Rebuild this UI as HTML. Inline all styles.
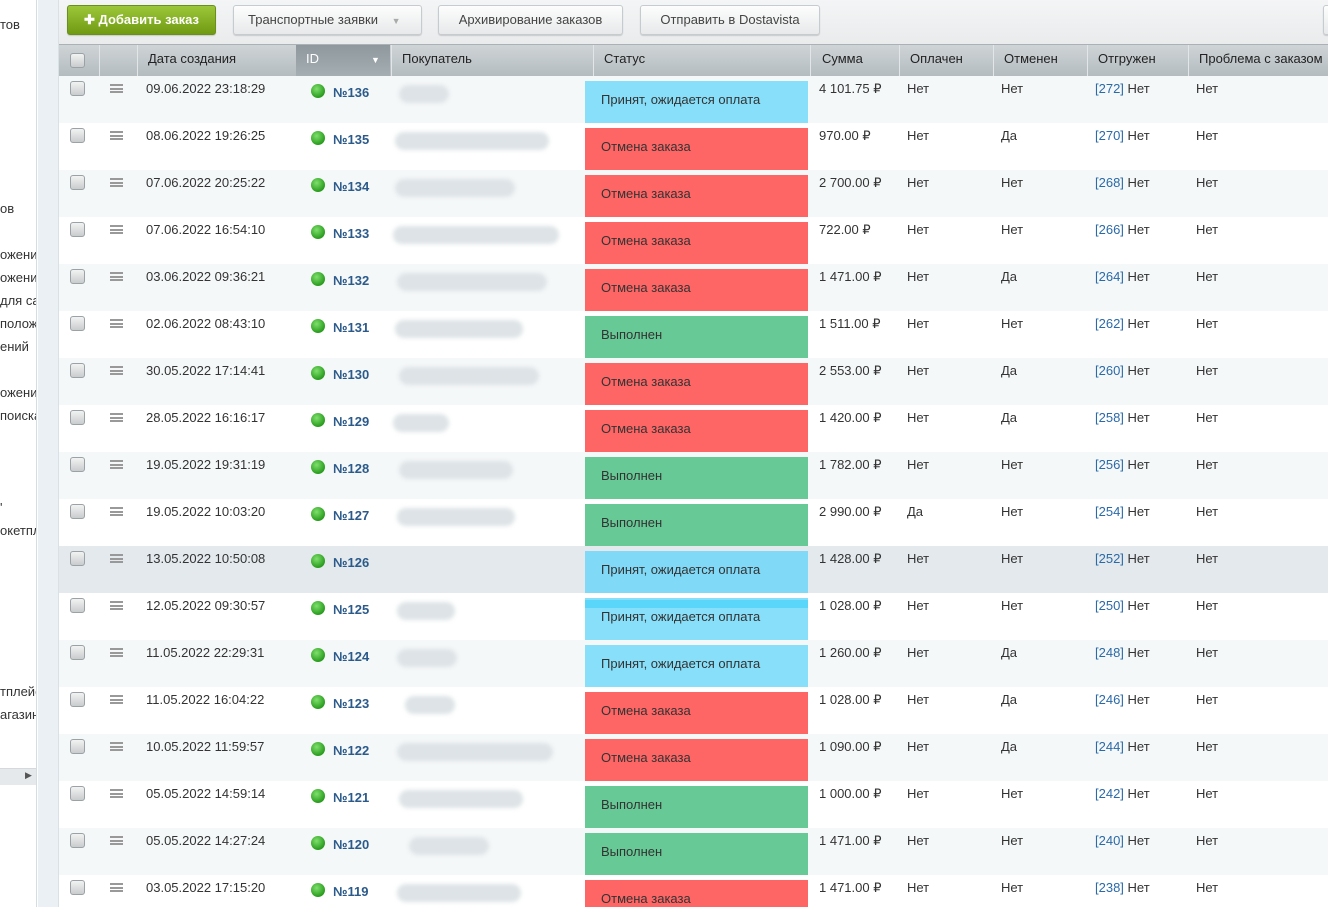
<!DOCTYPE html><html style="width:1328px;height:907px;overflow:hidden"><head><meta charset="utf-8"><style>
*{margin:0;padding:0;box-sizing:border-box}
body{width:1328px;height:907px;overflow:hidden;position:relative;background:#fff;font-family:"Liberation Sans",Arial,sans-serif;font-size:13px;color:#333}
.a{position:absolute;white-space:nowrap}
.sb{left:0;top:0;width:37px;height:907px;background:#fff;border-right:1px solid #d4dde3;overflow:hidden}
.sb div{position:absolute;left:0;font-size:13px;color:#333}
.strip{left:38px;top:0;width:21px;height:907px;background:#eaf0f3;border-right:1px solid #d9e1e5}
.tb{left:59px;top:0;width:1269px;height:44px;background:linear-gradient(#f4f5f6,#e9ebec)}
.btn{position:absolute;top:5px;height:30px;border:1px solid #c5cbce;border-radius:3px;background:linear-gradient(#fdfdfd,#e7e9ea);color:#444;font-size:13px;line-height:28px;text-align:center;box-shadow:0 1px 1px rgba(0,0,0,.15)}
.hd{left:59px;top:44px;width:1269px;height:32px;background:linear-gradient(#cfd4d6,#b4bcc0);border-top:1px solid #aab2b6}
.hd span{position:absolute;top:6px;color:#222;font-size:13px}
.hd i{position:absolute;top:0;width:1px;height:31px;background:#e2e6e8}
.row{position:absolute;left:59px;width:1269px;height:47px}
.cb{position:absolute;left:11px;top:5px;width:15px;height:15px;border:1px solid #9aa2a6;border-radius:3px;background:linear-gradient(#f2f2f2,#c9cccd)}
.mn{position:absolute;left:51px;top:8px;width:13px;height:9px;border-top:2px solid #999;border-bottom:2px solid #999}
.mn:after{content:"";position:absolute;left:0;top:1.5px;width:13px;height:2px;background:#999}
.t{position:absolute;top:5px}
.dot{position:absolute;left:252px;top:8px;width:14px;height:14px;border-radius:50%;background:radial-gradient(circle at 40% 35%,#7ee06b,#2a9c1f 70%)}
.id{position:absolute;left:274px;top:9px;color:#2b5a8a;font-weight:bold;font-size:13px}
.bl{position:absolute;top:9px;height:18px;border-radius:9px;background:#dde3e6;filter:blur(2px)}
.st{position:absolute;left:526px;top:5px;width:223px;height:42px;padding-left:16px;line-height:38px}
.B{background:#88dff9}.R{background:#fe6565}.G{background:#67c995}
.lk{color:#2a6aa8}
</style></head><body>
<div class="a sb">
<div style="top:17px">тов</div><div style="top:201px">ов</div><div style="top:247px">ожений</div><div style="top:270px">ожений</div><div style="top:293px">для са</div><div style="top:316px">положе</div><div style="top:339px">ений</div><div style="top:385px">ожений</div><div style="top:408px">поиска</div><div style="top:500px">'</div><div style="top:523px">окетпл</div><div style="top:684px">тплейс</div><div style="top:707px">агазин</div>
<div style="top:768px;left:0;right:0;height:17px;background:#e6e9eb;border-top:1px solid #d5d9db"></div>
<div style="top:770px;left:25px;font-size:9px;color:#555">▶</div>
</div>
<div class="a strip"></div>
<div class="a tb">
<div class="btn" style="left:8px;width:149px;background:linear-gradient(#9dc73a,#6f9a12);border-color:#6a8f1a;color:#fff;font-weight:bold">✚ Добавить заказ</div>
<div class="btn" style="left:174px;width:189px;text-align:left;padding-left:14px">Транспортные заявки <span style="color:#aaa;font-size:9px;margin-left:10px">▼</span></div>
<div class="btn" style="left:379px;width:185px">Архивирование заказов</div>
<div class="btn" style="left:581px;width:180px">Отправить в Dostavista</div>
<div class="btn" style="left:1264px;width:20px"></div>
</div>
<div class="a hd">
<div class="cb" style="top:8px"></div>
<i style="left:40px"></i><i style="left:78px"></i>
<span style="left:89px">Дата создания</span>
<div style="position:absolute;left:237px;top:0;width:94px;height:31px;background:linear-gradient(#8e989d,#a5aeb2)"></div>
<span style="left:247px;color:#fff">ID</span><span style="left:312px;color:#fff;font-size:9px;top:10px">▼</span>
<i style="left:332px"></i>
<span style="left:343px">Покупатель</span><i style="left:534px"></i>
<span style="left:545px">Статус</span><i style="left:751px"></i>
<span style="left:763px">Сумма</span><i style="left:840px"></i>
<span style="left:851px">Оплачен</span><i style="left:934px"></i>
<span style="left:945px">Отменен</span><i style="left:1028px"></i>
<span style="left:1039px">Отгружен</span><i style="left:1129px"></i>
<span style="left:1140px">Проблема с заказом</span>
</div>

<div class="row" style="top:76px;background:#f5f8f9"><div class="cb"></div><div class="mn"></div><span class="t" style="left:87px">09.06.2022 23:18:29</span><div class="dot"></div><span class="id">№136</span><div class="bl" style="left:340px;width:50px"></div><div class="st B">Принят, ожидается оплата</div><span class="t" style="left:760px">4 101.75 ₽</span><span class="t" style="left:848px">Нет</span><span class="t" style="left:942px">Нет</span><span class="t" style="left:1036px"><span class="lk">[272]</span> Нет</span><span class="t" style="left:1137px">Нет</span></div>
<div class="row" style="top:123px"><div class="cb"></div><div class="mn"></div><span class="t" style="left:87px">08.06.2022 19:26:25</span><div class="dot"></div><span class="id">№135</span><div class="bl" style="left:336px;width:154px"></div><div class="st R">Отмена заказа</div><span class="t" style="left:760px">970.00 ₽</span><span class="t" style="left:848px">Нет</span><span class="t" style="left:942px">Да</span><span class="t" style="left:1036px"><span class="lk">[270]</span> Нет</span><span class="t" style="left:1137px">Нет</span></div>
<div class="row" style="top:170px;background:#f5f8f9"><div class="cb"></div><div class="mn"></div><span class="t" style="left:87px">07.06.2022 20:25:22</span><div class="dot"></div><span class="id">№134</span><div class="bl" style="left:336px;width:120px"></div><div class="st R">Отмена заказа</div><span class="t" style="left:760px">2 700.00 ₽</span><span class="t" style="left:848px">Нет</span><span class="t" style="left:942px">Нет</span><span class="t" style="left:1036px"><span class="lk">[268]</span> Нет</span><span class="t" style="left:1137px">Нет</span></div>
<div class="row" style="top:217px"><div class="cb"></div><div class="mn"></div><span class="t" style="left:87px">07.06.2022 16:54:10</span><div class="dot"></div><span class="id">№133</span><div class="bl" style="left:334px;width:166px"></div><div class="st R">Отмена заказа</div><span class="t" style="left:760px">722.00 ₽</span><span class="t" style="left:848px">Нет</span><span class="t" style="left:942px">Нет</span><span class="t" style="left:1036px"><span class="lk">[266]</span> Нет</span><span class="t" style="left:1137px">Нет</span></div>
<div class="row" style="top:264px;background:#f5f8f9"><div class="cb"></div><div class="mn"></div><span class="t" style="left:87px">03.06.2022 09:36:21</span><div class="dot"></div><span class="id">№132</span><div class="bl" style="left:338px;width:150px"></div><div class="st R">Отмена заказа</div><span class="t" style="left:760px">1 471.00 ₽</span><span class="t" style="left:848px">Нет</span><span class="t" style="left:942px">Да</span><span class="t" style="left:1036px"><span class="lk">[264]</span> Нет</span><span class="t" style="left:1137px">Нет</span></div>
<div class="row" style="top:311px"><div class="cb"></div><div class="mn"></div><span class="t" style="left:87px">02.06.2022 08:43:10</span><div class="dot"></div><span class="id">№131</span><div class="bl" style="left:336px;width:128px"></div><div class="st G">Выполнен</div><span class="t" style="left:760px">1 511.00 ₽</span><span class="t" style="left:848px">Нет</span><span class="t" style="left:942px">Нет</span><span class="t" style="left:1036px"><span class="lk">[262]</span> Нет</span><span class="t" style="left:1137px">Нет</span></div>
<div class="row" style="top:358px;background:#f5f8f9"><div class="cb"></div><div class="mn"></div><span class="t" style="left:87px">30.05.2022 17:14:41</span><div class="dot"></div><span class="id">№130</span><div class="bl" style="left:340px;width:140px"></div><div class="st R">Отмена заказа</div><span class="t" style="left:760px">2 553.00 ₽</span><span class="t" style="left:848px">Нет</span><span class="t" style="left:942px">Да</span><span class="t" style="left:1036px"><span class="lk">[260]</span> Нет</span><span class="t" style="left:1137px">Нет</span></div>
<div class="row" style="top:405px"><div class="cb"></div><div class="mn"></div><span class="t" style="left:87px">28.05.2022 16:16:17</span><div class="dot"></div><span class="id">№129</span><div class="bl" style="left:334px;width:56px"></div><div class="st R">Отмена заказа</div><span class="t" style="left:760px">1 420.00 ₽</span><span class="t" style="left:848px">Нет</span><span class="t" style="left:942px">Да</span><span class="t" style="left:1036px"><span class="lk">[258]</span> Нет</span><span class="t" style="left:1137px">Нет</span></div>
<div class="row" style="top:452px;background:#f5f8f9"><div class="cb"></div><div class="mn"></div><span class="t" style="left:87px">19.05.2022 19:31:19</span><div class="dot"></div><span class="id">№128</span><div class="bl" style="left:340px;width:114px"></div><div class="st G">Выполнен</div><span class="t" style="left:760px">1 782.00 ₽</span><span class="t" style="left:848px">Нет</span><span class="t" style="left:942px">Нет</span><span class="t" style="left:1036px"><span class="lk">[256]</span> Нет</span><span class="t" style="left:1137px">Нет</span></div>
<div class="row" style="top:499px"><div class="cb"></div><div class="mn"></div><span class="t" style="left:87px">19.05.2022 10:03:20</span><div class="dot"></div><span class="id">№127</span><div class="bl" style="left:338px;width:118px"></div><div class="st G">Выполнен</div><span class="t" style="left:760px">2 990.00 ₽</span><span class="t" style="left:848px">Да</span><span class="t" style="left:942px">Нет</span><span class="t" style="left:1036px"><span class="lk">[254]</span> Нет</span><span class="t" style="left:1137px">Нет</span></div>
<div class="row" style="top:546px;background:#e3e9ec"><div class="cb"></div><div class="mn"></div><span class="t" style="left:87px">13.05.2022 10:50:08</span><div class="dot"></div><span class="id">№126</span><div class="st B" style="background:#80d9f6">Принят, ожидается оплата</div><span class="t" style="left:760px">1 428.00 ₽</span><span class="t" style="left:848px">Нет</span><span class="t" style="left:942px">Нет</span><span class="t" style="left:1036px"><span class="lk">[252]</span> Нет</span><span class="t" style="left:1137px">Нет</span></div>
<div class="row" style="top:593px"><div class="cb"></div><div class="mn"></div><span class="t" style="left:87px">12.05.2022 09:30:57</span><div class="dot"></div><span class="id">№125</span><div class="bl" style="left:338px;width:58px"></div><div class="st B" style="line-height:38px"><div style="position:absolute;left:0;top:2px;width:223px;height:8px;background:#5ad6fb"></div><span style="position:relative">Принят, ожидается оплата</span></div><span class="t" style="left:760px">1 028.00 ₽</span><span class="t" style="left:848px">Нет</span><span class="t" style="left:942px">Нет</span><span class="t" style="left:1036px"><span class="lk">[250]</span> Нет</span><span class="t" style="left:1137px">Нет</span></div>
<div class="row" style="top:640px;background:#f5f8f9"><div class="cb"></div><div class="mn"></div><span class="t" style="left:87px">11.05.2022 22:29:31</span><div class="dot"></div><span class="id">№124</span><div class="bl" style="left:338px;width:60px"></div><div class="st B">Принят, ожидается оплата</div><span class="t" style="left:760px">1 260.00 ₽</span><span class="t" style="left:848px">Нет</span><span class="t" style="left:942px">Да</span><span class="t" style="left:1036px"><span class="lk">[248]</span> Нет</span><span class="t" style="left:1137px">Нет</span></div>
<div class="row" style="top:687px"><div class="cb"></div><div class="mn"></div><span class="t" style="left:87px">11.05.2022 16:04:22</span><div class="dot"></div><span class="id">№123</span><div class="bl" style="left:346px;width:50px"></div><div class="st R">Отмена заказа</div><span class="t" style="left:760px">1 028.00 ₽</span><span class="t" style="left:848px">Нет</span><span class="t" style="left:942px">Да</span><span class="t" style="left:1036px"><span class="lk">[246]</span> Нет</span><span class="t" style="left:1137px">Нет</span></div>
<div class="row" style="top:734px;background:#f5f8f9"><div class="cb"></div><div class="mn"></div><span class="t" style="left:87px">10.05.2022 11:59:57</span><div class="dot"></div><span class="id">№122</span><div class="bl" style="left:338px;width:156px"></div><div class="st R">Отмена заказа</div><span class="t" style="left:760px">1 090.00 ₽</span><span class="t" style="left:848px">Нет</span><span class="t" style="left:942px">Да</span><span class="t" style="left:1036px"><span class="lk">[244]</span> Нет</span><span class="t" style="left:1137px">Нет</span></div>
<div class="row" style="top:781px"><div class="cb"></div><div class="mn"></div><span class="t" style="left:87px">05.05.2022 14:59:14</span><div class="dot"></div><span class="id">№121</span><div class="bl" style="left:340px;width:124px"></div><div class="st G">Выполнен</div><span class="t" style="left:760px">1 000.00 ₽</span><span class="t" style="left:848px">Нет</span><span class="t" style="left:942px">Нет</span><span class="t" style="left:1036px"><span class="lk">[242]</span> Нет</span><span class="t" style="left:1137px">Нет</span></div>
<div class="row" style="top:828px;background:#f5f8f9"><div class="cb"></div><div class="mn"></div><span class="t" style="left:87px">05.05.2022 14:27:24</span><div class="dot"></div><span class="id">№120</span><div class="bl" style="left:350px;width:80px"></div><div class="st G">Выполнен</div><span class="t" style="left:760px">1 471.00 ₽</span><span class="t" style="left:848px">Нет</span><span class="t" style="left:942px">Нет</span><span class="t" style="left:1036px"><span class="lk">[240]</span> Нет</span><span class="t" style="left:1137px">Нет</span></div>
<div class="row" style="top:875px;height:32px;overflow:hidden"><div class="cb"></div><div class="mn"></div><span class="t" style="left:87px">03.05.2022 17:15:20</span><div class="dot"></div><span class="id">№119</span><div class="bl" style="left:338px;width:124px"></div><div class="st R">Отмена заказа</div><span class="t" style="left:760px">1 471.00 ₽</span><span class="t" style="left:848px">Нет</span><span class="t" style="left:942px">Нет</span><span class="t" style="left:1036px"><span class="lk">[238]</span> Нет</span><span class="t" style="left:1137px">Нет</span></div>
</body></html>
